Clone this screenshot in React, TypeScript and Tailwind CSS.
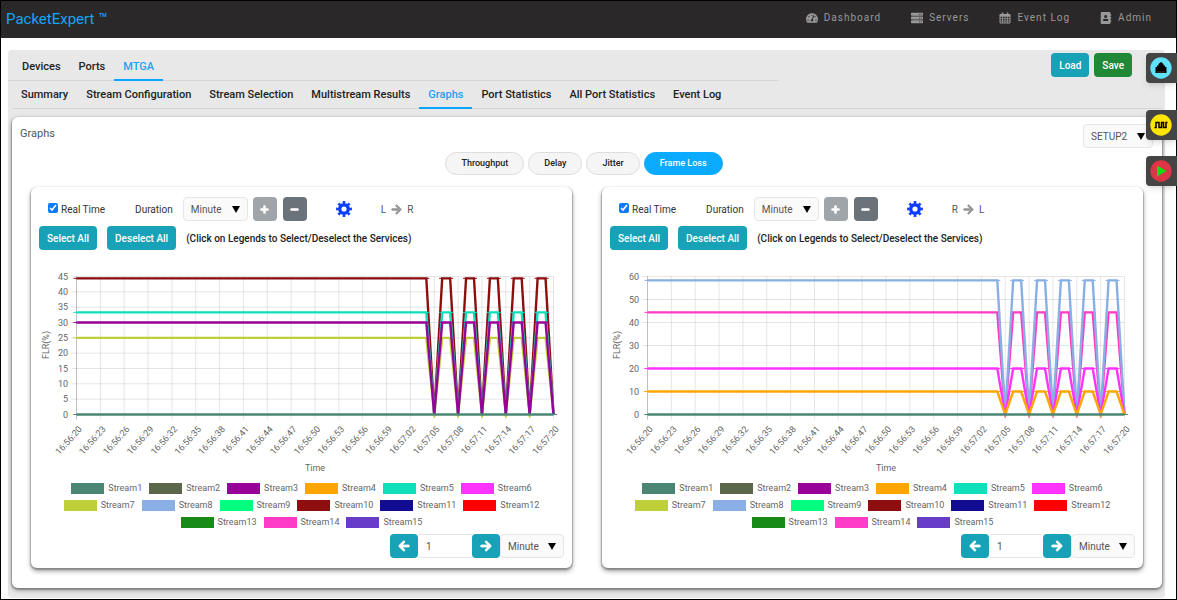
import type { ReactNode } from 'react'
import {
  FaAddressBook,
  FaArrowLeft,
  FaArrowRight,
  FaMinus,
  FaPlus,
  FaServer,
  FaTachometerAlt,
} from 'react-icons/fa'

function CalendarIcon() {
  return (
    <svg viewBox="0 0 24 24" width="12" height="12" fill="none" stroke="currentColor">
      <path d="M2 5h20v17H2z" strokeWidth="2" />
      <path d="M2 6h20v3H2z" fill="currentColor" />
      <path d="M7 1v6M17 1v6" strokeWidth="3" />
      <path d="M7 9v13M12 9v13M17 9v13M2 13.500h20M2 18h20" strokeWidth="1.500" />
    </svg>
  )
}

function GearIcon() {
  return (
    <svg viewBox="0 0 16 16" width="16" height="16" fill="none" stroke="currentColor">
      <circle cx="8" cy="8" r="4.300" strokeWidth="3.400" />
      <circle cx="8" cy="8" r="6.700" strokeWidth="2.400" pathLength="16" strokeDasharray="1 1" transform="rotate(-11.25 8 8)" />
    </svg>
  )
}

const navItems = [
  { label: 'Dashboard', icon: <FaTachometerAlt size={12} /> },
  { label: 'Servers', icon: <FaServer size={12} /> },
  { label: 'Event Log', icon: <CalendarIcon /> },
  { label: 'Admin', icon: <FaAddressBook size={12} /> },
]

const mainTabs = ['Devices', 'Ports', 'MTGA']

const subTabs = [
  'Summary',
  'Stream Configuration',
  'Stream Selection',
  'Multistream Results',
  'Graphs',
  'Port Statistics',
  'All Port Statistics',
  'Event Log',
]

const metrics = ['Throughput', 'Delay', 'Jitter', 'Frame Loss']

const streamColors = [
  '#4b8574',
  '#5c664b',
  '#990099',
  '#ffa500',
  '#10dfbb',
  '#ff33ff',
  '#bfcf38',
  '#8aafe4',
  '#00ff80',
  '#8e0e10',
  '#120c90',
  '#ff0000',
  '#188a18',
  '#ff3cc8',
  '#663cc8',
]

const legendRows = [
  [1, 2, 3, 4, 5, 6],
  [7, 8, 9, 10, 11, 12],
  [13, 14, 15],
]

type Series = { stream: number; level: number }

type ChartProps = {
  id: string
  max: number
  step: number
  series: Series[]
}

// plot area inside the 525x225 chart
const LEFT = 37.5
const RIGHT = 514.5
const TOP = 26.5
const BOTTOM = 164.5
const SECONDS = 60

const pointX = (i: number) => LEFT + (i * (RIGHT - LEFT)) / SECONDS

// loss is steady until 16:57:05, then falls to zero every third second
const valueAt = (i: number, level: number) => (i >= 45 && i % 3 === 0 ? 0 : level)

const timeLabel = (i: number) => {
  const total = 20 + i
  const minute = 56 + Math.floor(total / 60)
  return `16:${minute}:${String(total % 60).padStart(2, '0')}`
}

function Chart({ id, max, step, series }: ChartProps) {
  const y = (v: number) => BOTTOM - (v * (BOTTOM - TOP)) / max
  const yTicks = Array.from({ length: max / step + 1 }, (_, i) => i * step)
  const xTicks = Array.from({ length: 21 }, (_, i) => i * 3)
  const points = Array.from({ length: SECONDS + 1 }, (_, i) => i)

  return (
    <svg viewBox="0 0 525 225" className="block w-full font-['Roboto',sans-serif] text-[9px]" role="img" aria-label="Frame loss ratio over time">
      <clipPath id={id}>
        <rect x={LEFT - 4} y={TOP - 3} width={RIGHT - LEFT + 8} height={BOTTOM - TOP + 6} />
      </clipPath>
      {yTicks.map((v) => (
        <g key={v}>
          <line x1={LEFT - 5} x2={RIGHT} y1={y(v)} y2={y(v)} stroke="#000" strokeOpacity={0.1} />
          <text x={29} y={y(v) + 3} textAnchor="end" fill="#666">
            {v}
          </text>
        </g>
      ))}
      {xTicks.map((i) => (
        <g key={i}>
          <line x1={pointX(i)} x2={pointX(i)} y1={TOP} y2={BOTTOM + 5} stroke="#000" strokeOpacity={i === 0 ? 0.25 : 0.1} />
          <text transform={`translate(${pointX(i) + 6} ${BOTTOM + 15}) rotate(-48)`} textAnchor="end" fill="#666">
            {timeLabel(i)}
          </text>
        </g>
      ))}
      <g clipPath={`url(#${id})`}>
        {series.map(({ stream, level }) => (
          <g key={stream} stroke={streamColors[stream - 1]} fill="none">
            <polyline
              points={points.map((i) => `${pointX(i)},${y(valueAt(i, level))}`).join(' ')}
              strokeWidth={2.4}
              strokeMiterlimit={10}
            />
            {points.map((i) => (
              <line key={i} x1={pointX(i) - 3} x2={pointX(i) + 3} y1={y(valueAt(i, level))} y2={y(valueAt(i, level))} />
            ))}
          </g>
        ))}
      </g>
      <text transform="translate(10 95) rotate(-90)" textAnchor="middle" fill="#666">
        FLR(%)
      </text>
      <text x={276} y={221} textAnchor="middle" fill="#666">
        Time
      </text>
    </svg>
  )
}

function Select({ label, value, className }: { label: string; value: string; className: string }) {
  return (
    <div className={`relative h-6 ${className}`}>
      <select
        aria-label={label}
        defaultValue={value}
        className="block h-full w-full appearance-none rounded-sm border border-[#e6e6e6] bg-[#fafafa] pl-[7px] text-[10px] text-[#555]"
      >
        <option>{value}</option>
      </select>
      <svg viewBox="0 0 8 7" className="pointer-events-none absolute top-[9px] right-2 h-[7px] w-2">
        <path d="M0 0h8L4 7z" fill="#000" />
      </svg>
    </div>
  )
}

function GraphPanel({ from, to, ...chart }: ChartProps & { from: string; to: string }) {
  return (
    <section className="rounded-md bg-white px-2 pt-[10px] pb-[10px] shadow-[0_1px_1px_1px_rgba(0,0,0,0.2),0_3px_5px_rgba(0,0,0,0.4)]">
      <div className="flex h-6 items-center text-[10px] text-[#333]">
        <label className="ml-[9px] flex items-center gap-[3px]">
          <input type="checkbox" defaultChecked className="mb-[2px] h-[10px] w-[10px] accent-[#0d7bff]" />
          Real Time
        </label>
        <span className="ml-[30px]">Duration</span>
        <Select label="Duration" value="Minute" className="ml-[10px] w-[65px]" />
        <button aria-label="Increase duration" className="ml-[5px] flex h-6 w-6 items-center justify-center rounded-sm bg-[#a0a5aa] text-white">
          <FaPlus size={9} stroke="currentColor" strokeWidth={50} />
        </button>
        <button aria-label="Decrease duration" className="ml-[6px] flex h-6 w-6 items-center justify-center rounded-sm bg-[#6a727a] text-white">
          <FaMinus size={9} stroke="currentColor" strokeWidth={50} />
        </button>
        <button aria-label="Graph settings" className="ml-[29px] text-[#0a3cff]">
          <GearIcon />
        </button>
        <span className="ml-[29px] flex items-center gap-[5px] text-[#555]">
          {from}
          <FaArrowRight size={11} stroke="currentColor" strokeWidth={40} className="text-[#999]" />
          {to}
        </span>
      </div>

      <div className="mt-[5px] flex h-6 items-center gap-[10px] text-[10px] font-medium">
        <button className="h-6 rounded-sm bg-[#17a2b8] px-2 text-white">Select All</button>
        <button className="h-6 rounded-sm bg-[#17a2b8] px-2 text-white">Deselect All</button>
        <span className="text-[#222]">(Click on Legends to Select/Deselect the Services)</span>
      </div>

      <Chart {...chart} />

      <div className="mt-[5px] flex flex-col items-center text-[9px] text-[#666]">
        {legendRows.map((row) => (
          <div key={row[0]} className="flex h-[17px] items-center gap-[7px]">
            {row.map((n) => (
              <button key={n} className="flex items-center gap-1">
                <span className="h-[11px] w-[33px]" style={{ backgroundColor: streamColors[n - 1] }} />
                Stream{n}
              </button>
            ))}
          </div>
        ))}
      </div>

      <div className="mt-[3px] flex justify-end">
        <button aria-label="Previous" className="flex h-6 w-7 items-center justify-center rounded-sm bg-[#17a2b8] text-white">
          <FaArrowLeft size={12} stroke="currentColor" strokeWidth={40} />
        </button>
        <input
          aria-label="Window"
          defaultValue="1"
          className="h-6 w-[54px] border-y border-[#e6e6e6] bg-white px-2 text-[10px] text-[#555]"
        />
        <button aria-label="Next" className="flex h-6 w-7 items-center justify-center rounded-sm bg-[#17a2b8] text-white">
          <FaArrowRight size={12} stroke="currentColor" strokeWidth={40} />
        </button>
        <Select label="Window unit" value="Minute" className="w-[64px]" />
      </div>
    </section>
  )
}

function Tab({ label, active }: { label: string; active: boolean }) {
  return (
    <a
      href="#"
      className={`-mb-px flex items-center border-b-2 px-[9px] ${
        active ? 'border-[#0aa5ff] text-[#1ea0f5]' : 'border-transparent text-[#222]'
      }`}
    >
      {label}
    </a>
  )
}

function DockButton({ label, color, className, children }: { label: string; color: string; className: string; children: ReactNode }) {
  return (
    <button aria-label={label} className={`flex h-[30px] w-[31px] items-center rounded-l bg-[#444] pl-1 shadow-md ${className}`}>
      <svg viewBox="0 0 22 22" className="h-[22px] w-[22px]">
        <circle cx="11" cy="11" r="10.7" fill={color} />
        {children}
      </svg>
    </button>
  )
}

export default function App() {
  return (
    <div className="min-h-screen border border-black bg-white font-['Roboto',sans-serif]">
      <header className="flex h-[37px] items-center justify-between bg-[#2a2828] pr-6 pl-[5px]">
        <h1 className="text-[15px] text-[#14a5fa]">PacketExpert ™</h1>
        <nav className="flex gap-[30px] pb-1 text-[10px] tracking-[1px] text-[#999]">
          {navItems.map((item) => (
            <a key={item.label} href="#" className="flex items-center gap-[6px]">
              {item.icon}
              {item.label}
            </a>
          ))}
        </nav>
      </header>

      <main className="pt-3 pr-[11px] pl-[7px]">
        <div className="rounded bg-[#e8e8e8] pb-[10px]">
          <div className="flex h-[31px] justify-between text-[11px] font-medium">
            <nav className="flex w-2/3 border-b border-[#d6d6d6] pt-[5px] pl-[5px]">
              {mainTabs.map((tab) => (
                <Tab key={tab} label={tab} active={tab === 'MTGA'} />
              ))}
            </nav>
            <div className="mt-[3px] mr-[33px] flex gap-[5px] text-[10px] text-white">
              <button className="h-6 rounded-sm bg-[#17a2b8] px-2">Load</button>
              <button className="h-6 rounded-sm bg-[#218838] px-2">Save</button>
            </div>
          </div>
          <nav className="mr-[3px] ml-1 flex h-7 border-b border-[#d6d6d6] pt-[2px] text-[11px] font-medium">
            {subTabs.map((tab) => (
              <Tab key={tab} label={tab} active={tab === 'Graphs'} />
            ))}
          </nav>

          <div className="mt-2 mr-[3px] ml-1 rounded-md bg-white pt-[7px] pb-5 shadow-[0_1px_1px_1px_rgba(0,0,0,0.2),0_2px_5px_rgba(0,0,0,0.4)]">
            <div className="flex h-6 items-start justify-between pr-[9px] pl-2">
              <h2 className="text-[11px] leading-5 text-[#555]">Graphs</h2>
              <Select label="Setup" value="SETUP2" className="w-[70px]" />
            </div>

            <div className="mt-1 mr-[6px] flex justify-center gap-1 text-[9px] font-medium">
              {metrics.map((metric) => (
                <button
                  key={metric}
                  className={`h-[23px] rounded-full border px-[15px] ${
                    metric === 'Frame Loss' ? 'border-[#0aaaff] bg-[#0aaaff] text-white' : 'border-[#ddd] bg-[#f5f5f5] text-[#222]'
                  }`}
                >
                  {metric}
                </button>
              ))}
            </div>

            <div className="mt-3 grid grid-cols-2 gap-[30px] px-[19px]">
              <GraphPanel
                id="plot-lr"
                from="L"
                to="R"
                max={45}
                step={5}
                series={[
                  { stream: 10, level: 44.4 },
                  { stream: 7, level: 25 },
                  { stream: 5, level: 33.3 },
                  { stream: 3, level: 30 },
                  { stream: 1, level: 0 },
                ]}
              />
              <GraphPanel
                id="plot-rl"
                from="R"
                to="L"
                max={60}
                step={10}
                series={[
                  { stream: 14, level: 44.4 },
                  { stream: 8, level: 58.3 },
                  { stream: 6, level: 20 },
                  { stream: 4, level: 10 },
                  { stream: 1, level: 0 },
                ]}
              />
            </div>
          </div>
        </div>
      </main>

      <aside className="fixed top-[53px] right-0 flex flex-col">
        <DockButton label="Ports" color="#5fe3fa" className="">
          <path d="M5.500 16v-6h1.500V8.500h1.500V7L11 5l2.500 2v1.500H15V10h1.500v6z" fill="#000" />
          <path d="M8 14v2M10 14v2M12 14v2M14 14v2" stroke="#6a4a4a" strokeWidth="0.800" />
        </DockButton>
        <DockButton label="Signal" color="#ffe600" className="mt-[27px]">
          <path d="M4.500 13.500h1.500V8.500h3v5h2.500v-5h2v5H16v-5h1.500" fill="none" stroke="#000" strokeWidth="1.500" />
        </DockButton>
        <DockButton label="Start" color="#dc3545" className="mt-[16px]">
          <path d="M7 5.500v11l9.500-5.500z" fill="#0ee00e" />
        </DockButton>
      </aside>
    </div>
  )
}
